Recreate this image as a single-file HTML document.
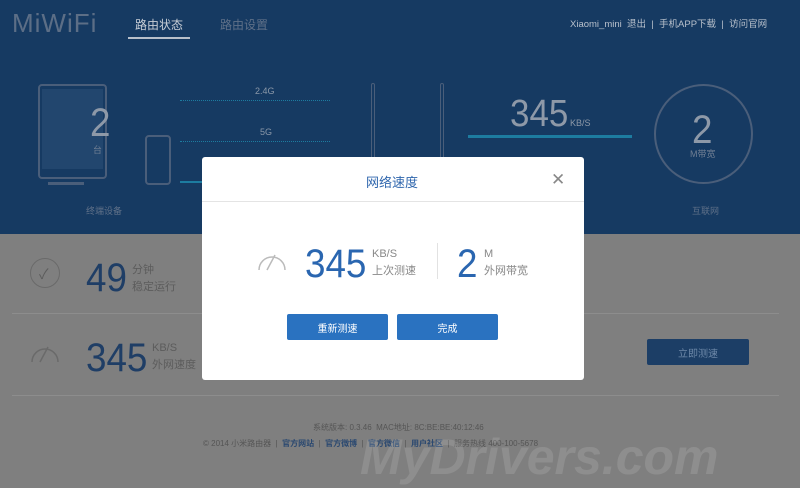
<!DOCTYPE html>
<html><head><meta charset="utf-8"><style>
*{margin:0;padding:0;box-sizing:border-box}
body{width:800px;height:488px;overflow:hidden;background:#7f7f7f;font-family:"Liberation Sans","Noto Sans CJK SC",sans-serif;position:relative}
.a{position:absolute}
.hd{left:0;top:0;width:800px;height:234px;background:#163a62}
.g{color:#5c5c5c}
.n{transform:scaleX(0.92);transform-origin:0 0;line-height:1}
.modal{left:202px;top:157px;width:382px;height:223px;background:#fff;border-radius:3px}
.btn{background:#2a72c0;color:#fff;font-size:10px;display:flex;align-items:center;justify-content:center;height:26px;width:101px;border-radius:2px}
</style></head><body>
<div class="a hd"></div>
<div class="a" style="left:12px;top:8px;font-size:26px;letter-spacing:1px;color:#5c6e86">MiWiFi</div>
<div class="a" style="left:135px;top:16px;font-size:12px;color:#c8ced6">路由状态</div>
<div class="a" style="left:128px;top:37px;width:62px;height:2px;background:#b8c0cb"></div>
<div class="a" style="left:220px;top:16px;font-size:12px;color:#5f7088">路由设置</div>
<div class="a" style="left:570px;top:16px;font-size:9.5px;color:#b8c0cb">Xiaomi_mini &nbsp;退出 &nbsp;| &nbsp;手机APP下载 &nbsp;| &nbsp;访问官网</div>
<div class="a" style="left:38px;top:84px;width:69px;height:95px;border:2px solid #4a5e7a;border-radius:4px"></div>
<div class="a" style="left:42px;top:89px;width:61px;height:80px;background:#22466e"></div>
<div class="a" style="left:48px;top:182px;width:36px;height:3px;background:#4a5e7a"></div>
<div class="a" style="left:145px;top:135px;width:26px;height:50px;border:2px solid #4a5e7a;border-radius:4px;background:#163a62"></div>
<div class="a n" style="left:90px;top:103px;font-size:40px;color:#8e99a8">2</div>
<div class="a" style="left:93px;top:143px;font-size:9px;color:#6f7e93">台</div>
<div class="a" style="left:86px;top:204px;font-size:9px;color:#5f7088">终端设备</div>
<div class="a" style="left:255px;top:86px;font-size:9px;color:#8a97a8">2.4G</div>
<div class="a" style="left:180px;top:100px;width:150px;border-top:1px dotted #1d7ca0"></div>
<div class="a" style="left:260px;top:127px;font-size:9px;color:#8a97a8">5G</div>
<div class="a" style="left:180px;top:141px;width:150px;border-top:1px dotted #1d7ca0"></div>
<div class="a" style="left:180px;top:181px;width:30px;height:2px;background:#1d7ca0"></div>
<div class="a" style="left:371px;top:83px;width:4px;height:80px;border:1px solid #4a5e7a;border-radius:2px"></div>
<div class="a" style="left:440px;top:83px;width:4px;height:80px;border:1px solid #4a5e7a;border-radius:2px"></div>
<div class="a n" style="left:510px;top:95px;font-size:38px;color:#8e99a8">345</div>
<div class="a" style="left:570px;top:118px;font-size:9px;color:#8e99a8">KB/S</div>
<div class="a" style="left:468px;top:135px;width:164px;height:3px;background:#1d7ca0"></div>
<div class="a" style="left:654px;top:84px;width:99px;height:100px;border:2px solid #4a5e7a;border-radius:50%"></div>
<div class="a n" style="left:692px;top:110px;font-size:40px;color:#8e99a8">2</div>
<div class="a" style="left:690px;top:147px;font-size:9px;color:#6f7e93">M带宽</div>
<div class="a" style="left:692px;top:204px;font-size:9px;color:#5f7088">互联网</div>
<div class="a" style="left:30px;top:258px;width:30px;height:30px;border:1.5px solid #6a6a6a;border-radius:50%"></div>
<div class="a g" style="left:39px;top:264px;font-size:14px">✓</div>
<div class="a n" style="left:86px;top:258px;font-size:40px;color:#1f3e66">49</div>
<div class="a g" style="left:132px;top:262px;font-size:11px;line-height:17px">分钟<br>稳定运行</div>
<div class="a" style="left:12px;top:313px;width:767px;height:1px;background:#8d8d8d"></div>
<svg class="a" style="left:29px;top:338px" width="32" height="26"><path d="M3 24 A13 13 0 0 1 29 24" fill="none" stroke="#6a6a6a" stroke-width="1.5"/><path d="M11 24 L19 9" stroke="#6a6a6a" stroke-width="1.5"/></svg>
<div class="a n" style="left:86px;top:338px;font-size:40px;color:#1f3e66">345</div>
<div class="a g" style="left:152px;top:340px;font-size:11px;line-height:17px">KB/S<br>外网速度</div>
<div class="a" style="left:647px;top:339px;width:102px;height:26px;background:#1c3e66;color:#6d88a8;font-size:10px;display:flex;align-items:center;justify-content:center;border-radius:2px">立即测速</div>
<div class="a" style="left:12px;top:395px;width:767px;height:1px;background:#8d8d8d"></div>
<div class="a" style="left:313px;top:422px;font-size:8px;color:#555">系统版本: 0.3.46 &nbsp;MAC地址: 8C:BE:BE:40:12:46</div>
<div class="a" style="left:203px;top:438px;font-size:8px;color:#555">© 2014 小米路由器 &nbsp;| &nbsp;<b style="color:#2a4870">官方网站</b> &nbsp;| &nbsp;<b style="color:#2a4870">官方微博</b> &nbsp;| &nbsp;<b style="color:#2a4870">官方微信</b> &nbsp;| &nbsp;<b style="color:#2a4870">用户社区</b> &nbsp;| &nbsp;服务热线 400-100-5678</div>
<div class="a" style="left:360px;top:428px;font-size:50px;font-weight:bold;font-style:italic;color:rgba(255,255,255,0.12)">MyDrivers.com</div>
<div class="a modal"></div>
<div class="a" style="left:202px;top:201px;width:382px;height:1px;background:#e4e4e4"></div>
<div class="a" style="left:366px;top:172px;font-size:13px;color:#2f66ad">网络速度</div>
<div class="a" style="left:551px;top:170px;font-size:17px;color:#888">✕</div>
<svg class="a" style="left:256px;top:246px" width="32" height="26"><path d="M3 24 A13 13 0 0 1 29 24" fill="none" stroke="#bbb" stroke-width="1.5"/><path d="M11 24 L19 9" stroke="#bbb" stroke-width="1.5"/></svg>
<div class="a n" style="left:305px;top:244px;font-size:40px;color:#2a66b0">345</div>
<div class="a" style="left:372px;top:246px;font-size:11px;color:#888;line-height:17px">KB/S<br>上次测速</div>
<div class="a" style="left:437px;top:243px;width:1px;height:36px;background:#e2e2e2"></div>
<div class="a n" style="left:457px;top:244px;font-size:40px;color:#2a66b0">2</div>
<div class="a" style="left:484px;top:246px;font-size:11px;color:#888;line-height:17px">M<br>外网带宽</div>
<div class="a btn" style="left:287px;top:314px">重新测速</div>
<div class="a btn" style="left:397px;top:314px">完成</div>
</body></html>
